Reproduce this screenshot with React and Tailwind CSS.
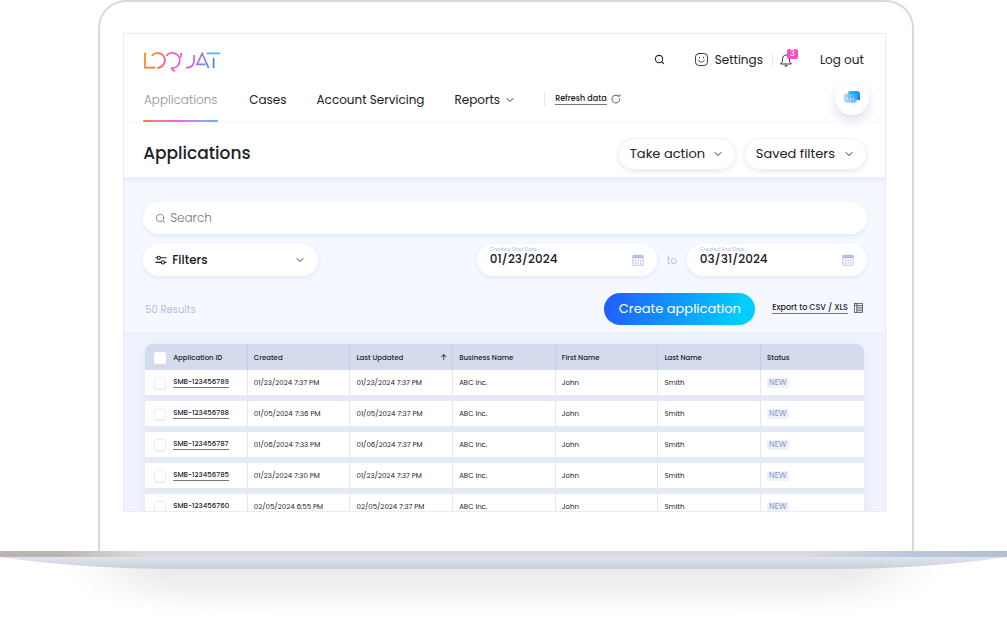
import { ChevronDown, Search } from 'lucide-react'

const navItems = ['Cases', 'Account Servicing']

const columns = ['Application ID', 'Created', 'Last Updated', 'Business Name', 'First Name', 'Last Name', 'Status']

const applications = [
  { id: 'SMB-123456789', created: '01/23/2024 7:37 PM', updated: '01/23/2024 7:37 PM' },
  { id: 'SMB-123456788', created: '01/05/2024 7:36 PM', updated: '01/05/2024 7:37 PM' },
  { id: 'SMB-123456787', created: '01/06/2024 7:33 PM', updated: '01/06/2024 7:37 PM' },
  { id: 'SMB-123456785', created: '01/23/2024 7:30 PM', updated: '01/23/2024 7:37 PM' },
  { id: 'SMB-123456760', created: '02/05/2024 6:55 PM', updated: '02/05/2024 7:37 PM' },
]

function Logo() {
  return (
    <svg viewBox="0 0 77 20" className="w-[77px] h-5 mt-1" fill="none" stroke="url(#logo)" strokeWidth="1.7" role="img" aria-label="Loquat">
      <defs>
        <linearGradient id="logo" gradientUnits="userSpaceOnUse" x1="8" y1="-2" x2="72" y2="14">
          <stop offset="0" stopColor="#f58220" />
          <stop offset="0.1" stopColor="#f5752e" />
          <stop offset="0.28" stopColor="#f84db8" />
          <stop offset="0.5" stopColor="#f04fd6" />
          <stop offset="0.72" stopColor="#a276e4" />
          <stop offset="0.88" stopColor="#5f86f0" />
          <stop offset="1" stopColor="#2f7cf8" />
        </linearGradient>
      </defs>
      <path d="M1 .8V15.7H11.2" />
      <path d="M7.8 3.6A7.4 7.4 0 1 1 13.2 15.8" />
      <path d="M22.2 4A7.5 7.5 0 1 1 27.2 15.9C28.2 16.2 27.8 18.6 31 18.8" />
      <path d="M37.2 1V3.2L36.4 5.6" />
      <path d="M50 3V8.6Q50 15.8 42 15.8" />
      <path d="M61.4 12.4H53L58.2 1.4L64.6 16" />
      <path d="M69.6 6V16" />
      <path d="M62.6 1.4H76" stroke="#45b4f2" />
    </svg>
  )
}

function SmileIcon() {
  return (
    <svg viewBox="0 0 13 13" className="size-[13px]" fill="none" stroke="currentColor" strokeWidth=".85" strokeLinecap="round">
      <rect x=".5" y=".5" width="12" height="12" rx="3.4" />
      <path d="M3.6 7.2C4.6 9.8 8.4 9.8 9.4 7.2" />
      <path d="M4.4 4.4V4.6M8.6 4.4V4.6" strokeWidth="1.2" />
    </svg>
  )
}

function BellIcon() {
  return (
    <svg viewBox="0 0 12 14" className="w-3 h-3.5" fill="none" stroke="currentColor" strokeWidth=".9" strokeLinejoin="round">
      <path d="M2.6 8.2V5.6C2.6 3.4 4 2 6 2S9.4 3.4 9.4 5.6V8.2L11.3 11H.7Z" />
      <path d="M5.2 12.9H6.8" strokeLinecap="round" strokeWidth="1.2" />
    </svg>
  )
}

function ChatIcon() {
  return (
    <svg viewBox="0 0 18 16" className="w-[18px] h-4">
      <defs>
        <linearGradient id="chat" x1="0" y1="0" x2="1" y2="1">
          <stop offset="0" stopColor="#00d0ff" />
          <stop offset="1" stopColor="#1a72ff" />
        </linearGradient>
        <linearGradient id="chatFront" x1="0" y1="0" x2="1" y2="0">
          <stop offset="0" stopColor="#b4d2f6" />
          <stop offset="1" stopColor="#45a4fb" />
        </linearGradient>
      </defs>
      <path d="M7.5 1H14Q17 1 17 4V10.5L15 9.8H7.5Q5 9.8 5 7V4Q5 1 7.5 1Z" fill="url(#chat)" />
      <path d="M3.6 3.6H10.6Q14 3.6 14 7V9.6Q14 12.4 12 12.6L11.4 15L8.8 12.8H3.6Q.8 12.8 .8 10V6.4Q.8 3.6 3.6 3.6Z" fill="url(#chatFront)" opacity=".85" />
      <path d="M11 12.6H12.8L11.4 15L8.8 12.8Z" fill="#e5f0fd" />
      <g fill="#fff">
        <circle cx="4.4" cy="8.8" r=".7" />
        <circle cx="7.4" cy="8.8" r=".7" />
        <circle cx="10.4" cy="8.8" r=".7" />
      </g>
    </svg>
  )
}

function RefreshIcon() {
  return (
    <svg viewBox="0 0 10 10" className="size-2.5" fill="none" stroke="currentColor" strokeWidth=".7">
      <path d="M8.7 4.4A3.9 3.9 0 1 1 7.4 2.1" />
      <path d="M6.4 1.9L9 2.1L9 .6" />
    </svg>
  )
}

function FiltersIcon() {
  return (
    <svg viewBox="0 0 12 10" className="w-3 h-2.5" fill="none" stroke="currentColor" strokeWidth="1.1">
      <path d="M.5 2.8H2.2M5.4 2.8H11.5M.5 7.4H6.2M9.6 7.4H11.5" />
      <circle cx="3.8" cy="2.8" r="1.6" />
      <circle cx="7.9" cy="7.4" r="1.6" />
    </svg>
  )
}

function CalendarIcon() {
  return (
    <svg viewBox="0 0 12 12" className="size-3 text-[#a9b7dc]" fill="none" stroke="currentColor">
      <rect x=".9" y="1.6" width="10.2" height="9.6" strokeWidth=".8" />
      <path d="M.9 3.2H11.1" strokeWidth="2" />
      <path d="M2.4 .4V2M4.8 .4V2M7.2 .4V2M9.6 .4V2" strokeWidth=".8" />
      <path d="M3 6.3H9.6M3 8.8H9.6" strokeWidth="1.3" strokeDasharray="1.3 1.2" />
    </svg>
  )
}

function SheetIcon() {
  return (
    <svg viewBox="0 0 9 10" className="w-[9px] h-2.5" fill="none" stroke="currentColor" strokeWidth=".6">
      <rect x=".5" y=".5" width="8" height="9" />
      <path d="M.5 2.4H8.5M2.8 .5V9.5M2.8 4.2H8.5M2.8 6H8.5M2.8 7.8H8.5" />
    </svg>
  )
}

function DateField({ id, label, value }) {
  return (
    <div className="flex items-center justify-between w-[180px] h-8 px-[13px] rounded-full bg-white shadow-[0_2px_5px_#e3e8f5]">
      <div className="flex flex-col">
        <label htmlFor={id} className="text-[5px] leading-[6px] text-[#b4c0e0]">{label}</label>
        <input id={id} type="text" defaultValue={value} className="w-24 h-3 mb-2 text-[12px] leading-3 font-medium outline-none" />
      </div>
      <CalendarIcon />
    </div>
  )
}

function Checkbox({ label, className }) {
  return <input type="checkbox" aria-label={label} className={`appearance-none size-3 shrink-0 rounded-[3px] bg-white ${className}`} />
}

function Header() {
  return (
    <header className="bg-white">
      <div className="flex items-center justify-between h-[51px] pl-5 pr-[21px] text-[12px]">
        <Logo />
        <div className="flex items-center">
          <button aria-label="Search"><Search className="size-[11px]" strokeWidth={2.2} /></button>
          <a href="#settings" className="flex items-center gap-[7px] ml-[30px]">
            <SmileIcon />
            Settings
          </a>
          <button aria-label="Notifications" className="relative ml-[9px] pl-[7px] border-l border-[#e3e8f8]">
            <BellIcon />
            <span className="absolute -top-1 left-3.5 flex items-center justify-center w-[11px] h-[10px] rounded-xs bg-[#fb4fbd] text-[8px] text-white">3</span>
          </button>
          <a href="#logout" className="ml-7">Log out</a>
        </div>
      </div>
      <div className="flex justify-between h-[38px] pt-0.5 pl-[19px] pr-4 border-b border-[#f8f8fb] text-[12px] leading-[26px]">
        <nav className="flex items-start">
          <a href="#applications" className="flex flex-col gap-[7px] w-[75px] mr-[31px] text-center font-light text-[#909094]">
            Applications
            <span className="h-0.5 rounded-full bg-linear-to-r from-[#f58220] via-[#e467e4] to-[#4fb4f4]" />
          </a>
          {navItems.map((item) => (
            <a key={item} href="#" className="mr-[30px]">{item}</a>
          ))}
          <button className="flex items-center gap-1">
            Reports
            <ChevronDown className="size-3" strokeWidth={1.8} />
          </button>
          <button className="flex items-center gap-1 h-3.5 mt-[5px] ml-[28px] pl-2.5 border-l border-[#e3e8f8] text-[8px] leading-[10px] font-medium">
            <span className="border-b border-[#77777b]">Refresh data</span>
            <RefreshIcon />
          </button>
        </nav>
        <button aria-label="Open chat" className="flex items-center justify-center size-[34px] -mt-1.5 rounded-full bg-white shadow-[0_6px_12px_#dfe1f0]">
          <ChatIcon />
        </button>
      </div>
      <div className="flex items-center justify-between pt-[15px] pb-[7px] pl-[19px] pr-[18px]">
        <h1 className="mb-0.5 text-[17px] leading-6 font-medium">Applications</h1>
        <div className="flex gap-2 text-[13px]">
          <button className="flex items-center justify-between w-[118px] h-8 px-[11px] rounded-full border border-[#f0f1fa] shadow-[0_2px_5px_#e8ebf5]">
            Take action
            <ChevronDown className="size-3" strokeWidth={1.8} />
          </button>
          <button className="flex items-center justify-between w-[123px] h-8 px-[11px] rounded-full border border-[#f0f1fa] shadow-[0_2px_5px_#e8ebf5]">
            Saved filters
            <ChevronDown className="size-3" strokeWidth={1.8} />
          </button>
        </div>
      </div>
    </header>
  )
}

function FilterPanel() {
  return (
    <section className="pt-[25px] pb-2 pl-[19px] pr-[18px] border-b border-[#e9eefa] bg-[#f5f8ff] shadow-[inset_0_7px_7px_-4px_#e8ebf7]">
      <label className="flex items-center gap-1 h-8 px-3 rounded-full bg-white text-[#77777b] shadow-[0_2px_5px_#e3e8f5]">
        <Search className="size-[11px]" strokeWidth={1.8} />
        <input type="text" placeholder="Search" aria-label="Search" className="grow text-[12px] font-light outline-none placeholder:text-[#77777b]" />
      </label>
      <div className="flex justify-between mt-[10px]">
        <button className="flex items-center w-[175px] h-8 px-3 rounded-full bg-white text-[12px] font-medium shadow-[0_2px_5px_#e3e8f5]">
          <FiltersIcon />
          <span className="ml-[5px] mr-auto">Filters</span>
          <ChevronDown className="size-3" strokeWidth={1.8} />
        </button>
        <div className="flex items-center">
          <DateField id="start" label="Created Start Date" value="01/23/2024" />
          <span className="w-[30px] text-center text-[10px] text-[#b4c0e0]">to</span>
          <DateField id="end" label="Created End Date" value="03/31/2024" />
        </div>
      </div>
      <div className="flex items-center mt-[17px] pl-0.5 pr-1">
        <p className="mr-auto text-[10px] text-[#b4c0e0]">50 Results</p>
        <button className="w-[151px] h-8 rounded-full bg-[linear-gradient(105deg,#2160ff_5%,#00ceff_90%)] text-[13px] text-white">Create application</button>
        <a href="#export" className="flex items-center gap-1.5 ml-[17px] mb-0.5 text-[8px] leading-[10px] font-medium">
          <span className="border-b border-[#77777b]">Export to CSV / XLS</span>
          <SheetIcon />
        </a>
      </div>
    </section>
  )
}

function ApplicationsTable() {
  const cell = 'h-[31px] pl-1.5 border-b-[6px] border-b-[#e6e9f6] border-r border-r-[#e4e7f3] last:border-r-0 bg-white'
  return (
    <section className="max-h-[177px] overflow-hidden pt-[10px] px-[21px] bg-[#eef3fd]">
      <table className="w-full table-fixed border-separate border-spacing-0 rounded-t-lg text-left text-[7px] leading-[10px] shadow-[0_2px_8px_#e2e6f4]">
        <thead>
          <tr>
            {columns.map((column) => (
              <th key={column} className="h-[26px] pt-0.5 pl-1.5 border-r border-r-[#c6cee5] bg-[#d4dbed] font-medium first:pl-[9px] first:rounded-tl-lg last:rounded-tr-lg last:border-r-0">
                <div className="flex items-center gap-[7px]">
                  {column === 'Application ID' && <Checkbox label="Select all" />}
                  {column}
                  {column === 'Last Updated' && <span className="ml-auto mr-[5px] text-[8px]">↑</span>}
                </div>
              </th>
            ))}
          </tr>
        </thead>
        <tbody className="text-[#202024]">
          {applications.map((row) => (
            <tr key={row.id}>
              <td className={cell}>
                <div className="flex items-center gap-[7px] pl-[3px]">
                  <Checkbox label={row.id} className="border border-[#eceffa] shadow-[0_1px_2px_#e8ebf7]" />
                  <a href="#" className="border-b border-[#77777b] font-medium">{row.id}</a>
                </div>
              </td>
              <td className={cell}>{row.created}</td>
              <td className={cell}>{row.updated}</td>
              <td className={cell}>ABC Inc.</td>
              <td className={cell}>John</td>
              <td className={cell}>Smith</td>
              <td className={cell}>
                <span className="block w-fit px-0.5 rounded-xs bg-[#edf1f8] text-[8px] text-[#8499c9]">NEW</span>
              </td>
            </tr>
          ))}
        </tbody>
      </table>
    </section>
  )
}

function LaptopBase() {
  return (
    <div>
      <div className="h-1.5 bg-linear-to-r from-[#bdb4b2] from-6% via-[#dadada] via-14% to-[#dadada]">
        <div className="h-full ml-auto w-1/5 bg-linear-to-r from-transparent via-[#b9c9de] to-[#b3bfcd]" />
      </div>
      <svg viewBox="0 0 1007 67" preserveAspectRatio="none" className="block w-full h-[67px]">
        <defs>
          <linearGradient id="base" x1="0" y1="0" x2="0" y2="1">
            <stop offset="0" stopColor="#dfe4ee" />
            <stop offset="1" stopColor="#c9ced9" />
          </linearGradient>
          <linearGradient id="shade" x1="0" y1="0" x2="0" y2="1">
            <stop offset="0" stopColor="#e6e6e6" />
            <stop offset="0.4" stopColor="#eeeeee" />
            <stop offset="1" stopColor="#fff" />
          </linearGradient>
          <filter id="soft" x="-10%" y="-30%" width="120%" height="160%">
            <feGaussianBlur stdDeviation="30 4" />
          </filter>
        </defs>
        <path d="M110 2H900L880 36Q850 58 780 58H230Q150 58 130 36Z" fill="url(#shade)" filter="url(#soft)" />
        <path d="M0 0H1007Q925 12 830 12H180Q82 12 0 0Z" fill="url(#base)" />
      </svg>
    </div>
  )
}

export default function App() {
  return (
    <main className="bg-white font-[Poppins,Inter,sans-serif] text-[#202024]">
      <div className="w-[81%] ml-[9.75%] pt-[31px] pb-[39px] pl-[23px] pr-[26px] border-2 border-b-0 border-[#d9d9d9] rounded-t-[28px]">
        <div className="border border-[#ececf0]">
          <Header />
          <FilterPanel />
          <ApplicationsTable />
        </div>
      </div>
      <LaptopBase />
    </main>
  )
}
